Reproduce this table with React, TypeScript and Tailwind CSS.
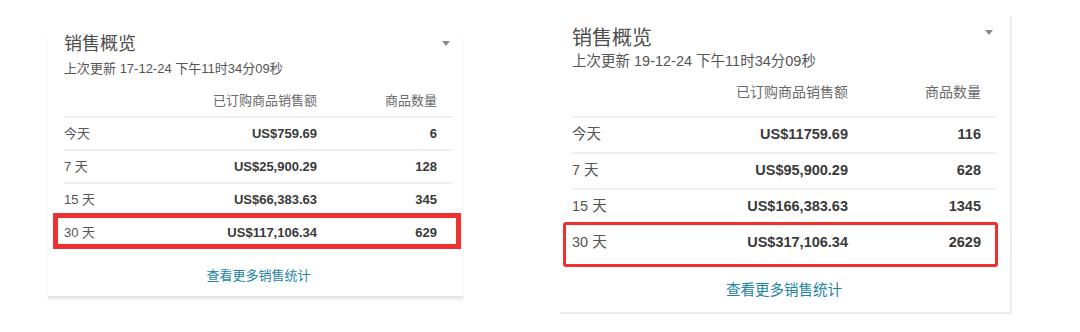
const leftRows = [
  { label: "今天", amount: "US$759.69", count: "6" },
  { label: "7 天", amount: "US$25,900.29", count: "128" },
  { label: "15 天", amount: "US$66,383.63", count: "345" },
  { label: "30 天", amount: "US$117,106.34", count: "629" },
];

const rightRows = [
  { label: "今天", amount: "US$11759.69", count: "116" },
  { label: "7 天", amount: "US$95,900.29", count: "628" },
  { label: "15 天", amount: "US$166,383.63", count: "1345" },
  { label: "30 天", amount: "US$317,106.34", count: "2629" },
];

type Row = { label: string; amount: string; count: string };

type CardStyle = {
  card: string;
  title: string;
  subtitle: string;
  caret: string;
  grid: string;
  head: string;
  row: string;
  box: string;
  link: string;
};

// left card is the smaller, older screenshot; right one is scaled up a bit
const small: CardStyle = {
  card: "ml-[48px] mt-[16px] w-[415px] pl-4 pr-[10px] pb-[10px] shadow-[0_2px_2px_rgba(0,0,0,0.08)] border-b-2 border-[#e6e6e6]",
  title: "text-[18px] leading-[24px]",
  subtitle: "text-[13px] leading-[18px] mt-1",
  caret: "mr-[3px] -mt-[2px]",
  grid: "grid-cols-[1fr_160px_120px] pr-4",
  head: "text-[13px] leading-[18px] pt-[14px] pb-[6px]",
  row: "h-[31px] text-[13px]",
  box: "-left-[11px] -right-[8px] -top-[4px] -bottom-[1px] border-[5px]",
  link: "mt-[18px] text-[13px] leading-[20px]",
};

const large: CardStyle = {
  card: "ml-[97px] w-[452px] pl-[12px] pr-[14px] pb-[12px] border-r-2 border-b-2 border-[#ececec]",
  title: "text-[20px] leading-[26px] mt-[9px]",
  subtitle: "text-[14.5px] leading-[20px]",
  caret: "mr-[3px] -mt-[3px]",
  grid: "grid-cols-[1fr_170px_133px] pr-[15px]",
  head: "text-[14px] leading-[20px] pt-[11px] pb-[14px]",
  row: "h-[34px] text-[14.5px]",
  box: "-left-[9px] -right-[2px] -top-[4px] -bottom-[7px] border-[3px] rounded-[3px]",
  link: "mt-[20px] text-[14.5px] leading-[20px]",
};

function Caret({ className }: { className: string }) {
  return (
    <svg width="8" height="5" viewBox="0 0 8 5" className={className}>
      <path d="M0 0 H8 L4 5 Z" fill="#8a8a8a" />
    </svg>
  );
}

function SalesCard({
  updated,
  rows,
  s,
}: {
  updated: string;
  rows: Row[];
  s: CardStyle;
}) {
  return (
    <section className={`shrink-0 bg-white ${s.card}`}>
      <div className="flex items-center justify-between">
        <h2 className={`font-normal text-[#4d4d4d] ${s.title}`}>销售概览</h2>
        <Caret className={s.caret} />
      </div>
      <p className={`text-[#555] ${s.subtitle}`}>上次更新 {updated}</p>

      <div className={`grid border-b-2 border-[#efefef] text-[#6a6a6a] ${s.grid} ${s.head}`}>
        <span />
        <span className="text-right">已订购商品销售额</span>
        <span className="text-right">商品数量</span>
      </div>

      {rows.map((row, index) => {
        const last = index === rows.length - 1;
        return (
          <div
            key={row.label}
            className={`relative grid items-center ${s.grid} ${s.row} ${
              last ? "" : "border-b-2 border-[#efefef] box-content"
            }`}
          >
            <span className="text-[#555]">{row.label}</span>
            <span className="text-right font-bold text-[#3a3a3a]">{row.amount}</span>
            <span className="text-right font-bold text-[#3a3a3a]">{row.count}</span>
            {last && (
              <span className={`pointer-events-none absolute border-[#ee3030] ${s.box}`} />
            )}
          </div>
        );
      })}

      <div className={`text-center ${s.link}`}>
        <a href="#" className="text-[#1c84a3]">
          查看更多销售统计
        </a>
      </div>
    </section>
  );
}

export default function App() {
  return (
    <main
      className="flex h-[332px] w-[1080px] items-start overflow-hidden bg-white pt-[16px]"
      style={{ fontFamily: '"Liberation Sans", "Noto Sans CJK SC", sans-serif' }}
    >
      <SalesCard updated="17-12-24 下午11时34分09秒" rows={leftRows} s={small} />
      <SalesCard updated="19-12-24 下午11时34分09秒" rows={rightRows} s={large} />
    </main>
  );
}
